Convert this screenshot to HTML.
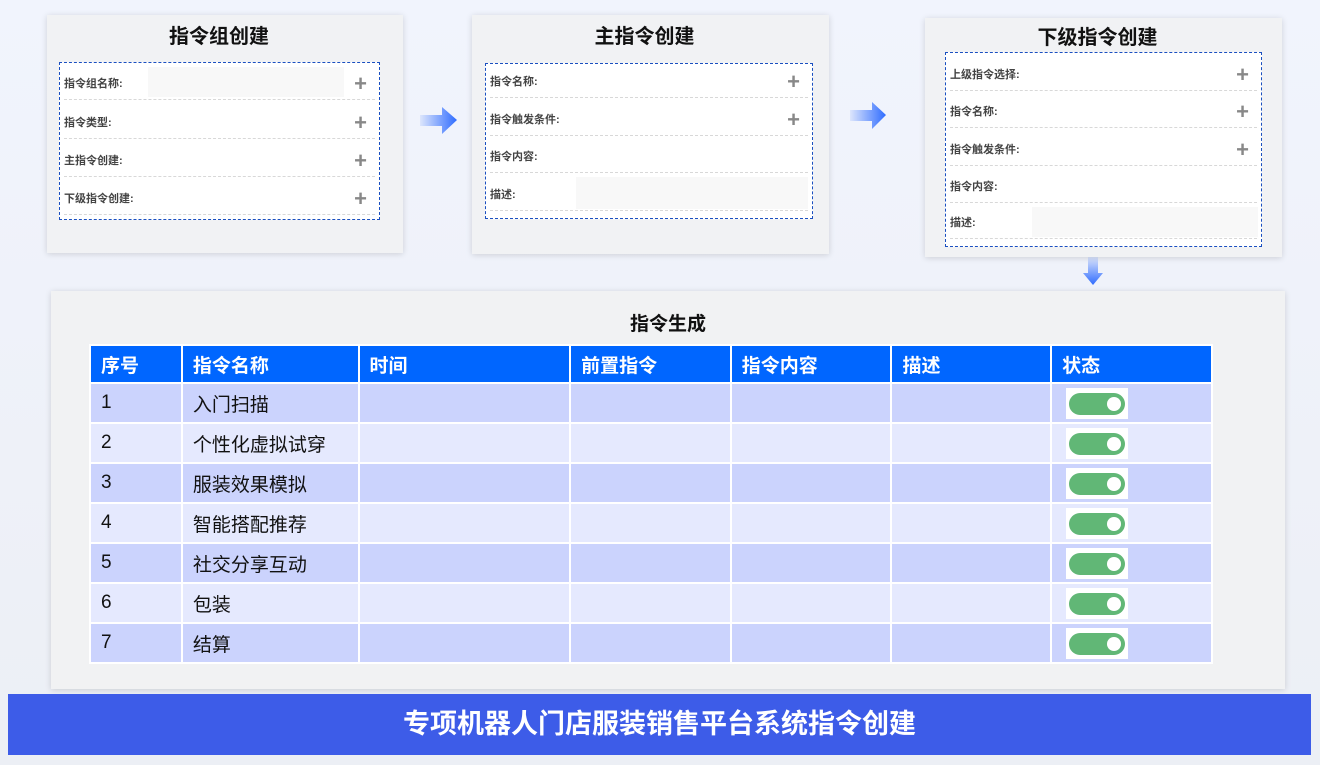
<!DOCTYPE html><html><head><meta charset="utf-8"><style>
*{margin:0;padding:0;box-sizing:border-box}
body{width:1320px;height:765px;overflow:hidden;background:linear-gradient(#f1f4fd,#eceff5);font-family:"Liberation Sans","Noto Sans CJK SC",sans-serif;position:relative}
.card{position:absolute;background:#f1f2f4;box-shadow:0 1px 6px rgba(0,0,0,.15)}
.card h2{position:absolute;left:0;right:12px;text-align:center;font-size:20px;font-weight:bold;color:#111}
.box{position:absolute;border:1px dashed #1a4fc0;background:#fff}
.row{position:absolute;left:4px;right:4px;border-bottom:1px dashed #d8d8d8;font-size:11px;font-weight:bold;color:#444}
.row span{position:absolute;left:0;bottom:8px}
.row i{position:absolute;right:8px;bottom:2px;font-style:normal;font-weight:bold;font-size:22px;color:#888}
.row b{position:absolute;background:#f8f8f8}
table{position:absolute;left:89px;top:344px;border-collapse:collapse;width:1124px}
td,th{border:2px solid #fff;height:40px;text-align:left;padding-left:10px;font-size:19px;color:#111;font-weight:normal}
th{background:#0066ff;color:#fff;font-weight:bold;height:38px}
tr:nth-child(even) td{background:#cbd3fd}
tr:nth-child(odd) td{background:#e5e9fe}
.tg{display:inline-block;width:62px;height:31px;background:#fff;position:relative;vertical-align:middle;margin-left:4px}
.tg:before{content:"";position:absolute;left:3px;top:5px;width:56px;height:22px;border-radius:11px;background:#61b776}
.tg:after{content:"";position:absolute;left:41px;top:9px;width:14px;height:14px;border-radius:50%;background:#fff}
</style></head><body>
<div class="card" style="left:47px;top:15px;width:356px;height:238px"><h2 style="top:5px">指令组创建</h2>
<div class="box" style="left:12px;top:47px;width:321px;height:158px">
<div class="row" style="top:0;height:37px"><b style="left:84px;top:4px;width:196px;height:30px"></b><span>指令组名称:</span><i>+</i></div>
<div class="row" style="top:37px;height:39px"><span>指令类型:</span><i>+</i></div>
<div class="row" style="top:76px;height:38px"><span>主指令创建:</span><i>+</i></div>
<div class="row" style="top:114px;height:38px"><span>下级指令创建:</span><i>+</i></div></div></div>
<div class="card" style="left:472px;top:15px;width:357px;height:239px"><h2 style="top:5px">主指令创建</h2>
<div class="box" style="left:13px;top:48px;width:328px;height:156px">
<div class="row" style="top:0;height:34px"><span>指令名称:</span><i>+</i></div>
<div class="row" style="top:34px;height:38px"><span>指令触发条件:</span><i>+</i></div>
<div class="row" style="top:72px;height:37px"><span>指令内容:</span></div>
<div class="row" style="top:109px;height:38px"><b style="left:86px;top:4px;width:232px;height:32px"></b><span>描述:</span></div></div></div>
<div class="card" style="left:925px;top:18px;width:357px;height:239px"><h2 style="top:3px">下级指令创建</h2>
<div class="box" style="left:20px;top:34px;width:317px;height:195px">
<div class="row" style="top:0;height:38px"><span>上级指令选择:</span><i>+</i></div>
<div class="row" style="top:38px;height:37px"><span>指令名称:</span><i>+</i></div>
<div class="row" style="top:75px;height:38px"><span>指令触发条件:</span><i>+</i></div>
<div class="row" style="top:113px;height:37px"><span>指令内容:</span></div>
<div class="row" style="top:150px;height:36px"><b style="left:82px;top:4px;width:226px;height:30px"></b><span>描述:</span></div></div></div>
<svg style="position:absolute;left:420px;top:106px" width="40" height="30"><defs><linearGradient id="g"><stop offset="0" stop-color="#2f6cff" stop-opacity=".1"/><stop offset="1" stop-color="#2f6cff"/></linearGradient></defs><path d="M0 9H22V1L37 14 22 28V20H0Z" fill="url(#g)"/></svg>
<svg style="position:absolute;left:850px;top:101px" width="40" height="30"><path d="M0 9H22V1L36 14 22 28V20H0Z" fill="url(#g)"/></svg>
<svg style="position:absolute;left:1082px;top:257px" width="22" height="30"><defs><linearGradient id="h" x2="0" y2="1"><stop offset="0" stop-color="#2f6cff" stop-opacity=".1"/><stop offset="1" stop-color="#2f6cff"/></linearGradient></defs><path d="M6 0H16V16H21L11 28 1 16H6Z" fill="url(#h)"/></svg>
<div class="card" style="left:51px;top:291px;width:1234px;height:398px;background:#f1f2f3"><h2 style="top:18px;font-size:19px;right:0">指令生成</h2></div>
<table><colgroup><col style="width:92px"><col style="width:177px"><col style="width:212px"><col style="width:161px"><col style="width:161px"><col style="width:160px"><col style="width:161px"></colgroup>
<tr><th>序号</th><th>指令名称</th><th>时间</th><th>前置指令</th><th>指令内容</th><th>描述</th><th>状态</th></tr>
<tr><td>1</td><td>入门扫描</td><td></td><td></td><td></td><td></td><td><span class="tg"></span></td></tr>
<tr><td>2</td><td>个性化虚拟试穿</td><td></td><td></td><td></td><td></td><td><span class="tg"></span></td></tr>
<tr><td>3</td><td>服装效果模拟</td><td></td><td></td><td></td><td></td><td><span class="tg"></span></td></tr>
<tr><td>4</td><td>智能搭配推荐</td><td></td><td></td><td></td><td></td><td><span class="tg"></span></td></tr>
<tr><td>5</td><td>社交分享互动</td><td></td><td></td><td></td><td></td><td><span class="tg"></span></td></tr>
<tr><td>6</td><td>包装</td><td></td><td></td><td></td><td></td><td><span class="tg"></span></td></tr>
<tr><td>7</td><td>结算</td><td></td><td></td><td></td><td></td><td><span class="tg"></span></td></tr>
</table>
<div style="position:absolute;left:8px;top:694px;width:1303px;height:61px;background:#3d5ce8;color:#fff;font-size:27px;font-weight:bold;text-align:center;line-height:61px">专项机器人门店服装销售平台系统指令创建</div>
</body></html>
